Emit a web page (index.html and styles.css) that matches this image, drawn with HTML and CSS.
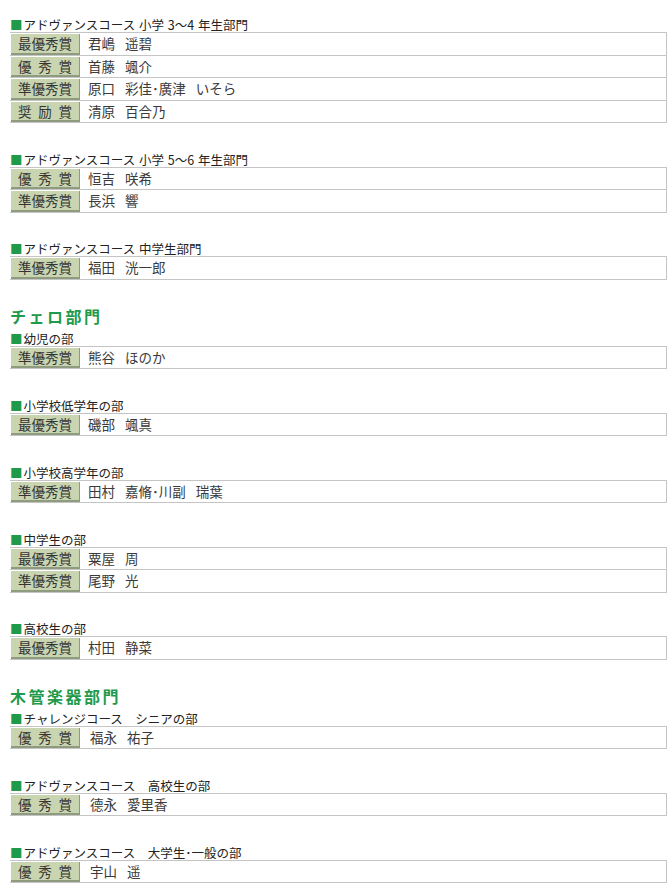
FILE: index.html
```html
<!DOCTYPE html>
<html lang="ja">
<head>
<meta charset="utf-8">
<title>受賞者一覧</title>
<link rel="stylesheet" href="styles.css">
</head>
<body>
<div class="page">
  <section class="block">
    <h3 class="cat"><span class="sq">■</span>アドヴァンスコース 小学 3〜4 年生部門</h3>
    <div class="tbl">
      <div class="row"><span class="lbl">最優秀賞</span><span class="name">君嶋 遥碧</span></div>
      <div class="row"><span class="lbl">優 秀 賞</span><span class="name">首藤 颯介</span></div>
      <div class="row"><span class="lbl">準優秀賞</span><span class="name">原口 彩佳･廣津 いそら</span></div>
      <div class="row"><span class="lbl">奨 励 賞</span><span class="name">清原 百合乃</span></div>
    </div>
  </section>
  <section class="block">
    <h3 class="cat"><span class="sq">■</span>アドヴァンスコース 小学 5〜6 年生部門</h3>
    <div class="tbl">
      <div class="row"><span class="lbl">優 秀 賞</span><span class="name">恒吉 咲希</span></div>
      <div class="row"><span class="lbl">準優秀賞</span><span class="name">長浜 響</span></div>
    </div>
  </section>
  <section class="block">
    <h3 class="cat"><span class="sq">■</span>アドヴァンスコース 中学生部門</h3>
    <div class="tbl">
      <div class="row"><span class="lbl">準優秀賞</span><span class="name">福田 洸一郎</span></div>
    </div>
  </section>

  <h2 class="sec">チェロ部門</h2>
  <section class="block">
    <h3 class="cat"><span class="sq">■</span>幼児の部</h3>
    <div class="tbl">
      <div class="row"><span class="lbl">準優秀賞</span><span class="name">熊谷 ほのか</span></div>
    </div>
  </section>
  <section class="block">
    <h3 class="cat"><span class="sq">■</span>小学校低学年の部</h3>
    <div class="tbl">
      <div class="row"><span class="lbl">最優秀賞</span><span class="name">磯部 颯真</span></div>
    </div>
  </section>
  <section class="block">
    <h3 class="cat"><span class="sq">■</span>小学校高学年の部</h3>
    <div class="tbl">
      <div class="row"><span class="lbl">準優秀賞</span><span class="name">田村 嘉脩･川副 瑞葉</span></div>
    </div>
  </section>
  <section class="block">
    <h3 class="cat"><span class="sq">■</span>中学生の部</h3>
    <div class="tbl">
      <div class="row"><span class="lbl">最優秀賞</span><span class="name">粟屋 周</span></div>
      <div class="row"><span class="lbl">準優秀賞</span><span class="name">尾野 光</span></div>
    </div>
  </section>
  <section class="block">
    <h3 class="cat"><span class="sq">■</span>高校生の部</h3>
    <div class="tbl">
      <div class="row"><span class="lbl">最優秀賞</span><span class="name">村田 静菜</span></div>
    </div>
  </section>

  <h2 class="sec">木管楽器部門</h2>
  <section class="block">
    <h3 class="cat"><span class="sq">■</span>チャレンジコース　シニアの部</h3>
    <div class="tbl">
      <div class="row"><span class="lbl">優 秀 賞</span><span class="name name-wide">福永 祐子</span></div>
    </div>
  </section>
  <section class="block">
    <h3 class="cat"><span class="sq">■</span>アドヴァンスコース　高校生の部</h3>
    <div class="tbl">
      <div class="row"><span class="lbl">優 秀 賞</span><span class="name name-wide">德永 愛里香</span></div>
    </div>
  </section>
  <section class="block">
    <h3 class="cat"><span class="sq">■</span>アドヴァンスコース　大学生･一般の部</h3>
    <div class="tbl">
      <div class="row"><span class="lbl">優 秀 賞</span><span class="name name-wide">宇山 遥</span></div>
    </div>
  </section>
</div>
</body>
</html>
```

FILE: styles.css
```css
html, body {
  margin: 0;
  padding: 0;
  background: #ffffff;
}

body {
  font-family: "Noto Sans CJK JP", "Noto Sans", sans-serif;
  color: #333333;
}

.page {
  padding: 17px 3px 0 10px;
}

.block {
  margin: 0 0 28.5px 0;
}

.cat {
  margin: 0;
  font-size: 12.5px;
  font-weight: normal;
  line-height: 15px;
  height: 15px;
  color: #222222;
  white-space: nowrap;
  word-spacing: 1px;
}

.sq {
  color: #1f9a4b;
  margin-right: 1px;
}

.sec {
  margin: 0;
  font-size: 16px;
  font-weight: bold;
  line-height: 16px;
  padding-bottom: 6.5px;
  letter-spacing: 2.5px;
  color: #1f9a4b;
}

.tbl {
  border-top: 1px solid #c4c4c4;
  border-right: 1px solid #c4c4c4;
}

.row {
  display: flex;
  align-items: stretch;
  height: 21.5px;
  border-bottom: 1px solid #c4c4c4;
}

.lbl {
  box-sizing: content-box;
  width: 54px;
  margin: 1px 0 0 1px;
  padding: 0 7px;
  background: #c9d4b0;
  border-bottom: 2px solid #8f9b7f;
  border-right: 1px solid #8f9b7f;
  font-size: 13.5px;
  line-height: 18.5px;
  color: #333333;
  text-align: justify;
  text-align-last: justify;
  white-space: nowrap;
}

.name {
  padding-left: 8px;
  font-size: 13.5px;
  line-height: 21.5px;
  color: #3a3a3a;
  word-spacing: 7px;
  white-space: nowrap;
}

.name-wide {
  padding-left: 10px;
}
```
